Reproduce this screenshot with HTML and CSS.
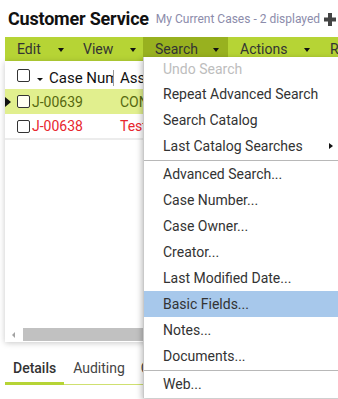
FILE: index.html
```html
<!DOCTYPE html>
<html lang="en">
<head>
  <meta charset="UTF-8" />
  <title>Customer Service</title>
  <link rel="stylesheet" href="styles.css">
</head>
<body>

  <div class="title-bar">
    <h1 class="title">Customer Service</h1>
    <span class="subtitle">My Current Cases - 2 displayed</span>
    <svg class="add-icon" width="12" height="13" viewBox="0 0 12 13">
      <rect x="4" y="0" width="4" height="13" fill="#444"/>
      <rect x="0" y="4.5" width="12" height="4" fill="#444"/>
    </svg>
  </div>

  <div class="toolbar">
    <div class="tb-item tb-edit">Edit <span class="caret"></span></div>
    <div class="tb-item tb-view">View <span class="caret"></span></div>
    <div class="tb-item tb-search active">Search <span class="caret"></span></div>
    <div class="tb-item tb-actions">Actions <span class="caret"></span></div>
    <div class="tb-item tb-reports">Reports <span class="caret"></span></div>
  </div>

  <div class="grid">
    <div class="grid-head">
      <div class="cell-sel"><span class="checkbox"></span><span class="caret-sm"></span></div>
      <div class="head-text cell-num">Case Number</div>
      <div class="col-sep"></div>
      <div class="head-text cell-assigned">Assigned To</div>
    </div>
    <div class="grid-row row-current">
      <div class="cell-main"><span class="row-marker"></span><span class="checkbox"></span><span class="case-no">J-00639</span></div>
      <div class="cell-assigned">CONSULTING</div>
    </div>
    <div class="grid-row row-alert">
      <div class="cell-main"><span class="checkbox"></span><span class="case-no">J-00638</span></div>
      <div class="cell-assigned">Test case</div>
    </div>
    <div class="grid-space"></div>
    <div class="hscroll">
      <div class="hscroll-btn"><span class="arrow-left"></span></div>
      <div class="hscroll-thumb"></div>
    </div>
  </div>

  <div class="tabs">
    <div class="tab active">Details</div>
    <div class="tab">Auditing</div>
    <div class="tab">Contacts</div>
  </div>

  <!-- Search dropdown -->
  <div class="menu">
    <div class="menu-item first disabled">Undo Search</div>
    <div class="menu-item">Repeat Advanced Search</div>
    <div class="menu-item">Search Catalog</div>
    <div class="menu-item">Last Catalog Searches <span class="sub-arrow"></span></div>
    <div class="menu-sep"></div>
    <div class="menu-item">Advanced Search...</div>
    <div class="menu-item">Case Number...</div>
    <div class="menu-item">Case Owner...</div>
    <div class="menu-item">Creator...</div>
    <div class="menu-item">Last Modified Date...</div>
    <div class="menu-item hover">Basic Fields...</div>
    <div class="menu-item">Notes...</div>
    <div class="menu-item">Documents...</div>
    <div class="menu-sep"></div>
    <div class="menu-item">Web...</div>
  </div>

</body>
</html>
```

FILE: styles.css
```css
html, body {
  overflow: hidden;
}

body {
  margin: 0;
  font-family: Roboto, 'Liberation Sans', sans-serif;
  background: #ffffff;
  color: #333333;
  width: 338px;
  height: 399px;
  position: relative;
}

.title-bar {
  display: flex;
  align-items: center;
  height: 37px;
  padding: 8px 0 7px 8px;
  box-sizing: border-box;
  white-space: nowrap;
}

.title {
  margin: 0;
  font-size: 18px;
  line-height: 22px;
  font-weight: 700;
  letter-spacing: -0.2px;
  color: #111111;
}

.subtitle {
  margin-left: 7px;
  font-size: 12px;
  line-height: 16px;
  color: #8c8cab;
}

.add-icon {
  margin-left: 4px;
  flex: none;
}

/* toolbar */
.toolbar {
  display: flex;
  margin-left: 5px;
  height: 24px;
  background-color: #b6d435;
  white-space: nowrap;
  overflow: hidden;
}

.tb-item {
  display: flex;
  align-items: center;
  justify-content: space-between;
  flex: none;
  box-sizing: border-box;
  padding: 0 7px 0 12px;
  font-size: 14px;
  line-height: 24px;
  color: #333333;
}

.tb-item.active {
  background-color: #98b11f;
  padding-right: 9px;
}

.tb-edit { width: 66px; }
.tb-view { width: 72px; }
.tb-search { width: 85px; }
.tb-actions { width: 90px; padding-right: 8px; }
.tb-reports { width: 20px; overflow: hidden; }

.caret {
  width: 0;
  height: 0;
  border-left: 3.5px solid transparent;
  border-right: 3.5px solid transparent;
  border-top: 4px solid #111111;
  margin-top: 2px;
}

/* grid */
.grid {
  display: flex;
  flex-direction: column;
  margin-left: 5px;
  width: 320px;
  height: 281px;
  background: #ffffff;
  box-shadow: 0 1px 6px rgba(0, 0, 0, 0.22);
}

.grid-head {
  display: flex;
  align-items: center;
  height: 28px;
  white-space: nowrap;
}

.cell-sel {
  display: flex;
  align-items: center;
  width: 41px;
  box-sizing: border-box;
  padding-left: 12px;
  flex: none;
}

.checkbox {
  display: inline-block;
  width: 13px;
  height: 13px;
  box-sizing: border-box;
  border: 1px solid #333333;
  border-radius: 2px;
  background: #ffffff;
  flex: none;
}

.caret-sm {
  width: 0;
  height: 0;
  border-left: 3px solid transparent;
  border-right: 3px solid transparent;
  border-top: 3.5px solid #111111;
  margin: 9px 0 0 7px;
}

.head-text {
  margin-top: 6px;
  font-size: 15px;
  line-height: 16px;
  color: #111111;
}

.cell-num {
  width: 67px;
  box-sizing: border-box;
  padding: 0 6px 0 3px;
  overflow: hidden;
  flex: none;
}

.col-sep {
  width: 1px;
  height: 16px;
  margin-top: 6px;
  background: #9a9a9a;
  flex: none;
}

.cell-assigned {
  width: 29px;
  box-sizing: border-box;
  padding-left: 6px;
  overflow: hidden;
  flex: none;
}

.grid-row {
  display: flex;
  align-items: center;
  height: 25px;
  font-size: 14px;
  white-space: nowrap;
}

.grid-row .cell-assigned {
  width: 34px;
}

.row-current {
  background-color: #e1ef8e;
  color: #56680f;
}

.row-current .checkbox {
  background: #fffff2;
}

.row-alert {
  height: 24px;
  border-bottom: 2px solid #ececec;
  color: #e8262d;
}

.cell-main {
  display: flex;
  align-items: center;
  width: 109px;
  box-sizing: border-box;
  padding-left: 12px;
  overflow: hidden;
  flex: none;
}

.row-current .cell-main {
  padding-left: 0;
}

.row-marker {
  width: 0;
  height: 0;
  border-top: 5px solid transparent;
  border-bottom: 5px solid transparent;
  border-left: 6px solid #111111;
  margin-right: 6px;
}

.case-no {
  margin-left: 2px;
}

.grid-space {
  flex: 1;
}

.hscroll {
  display: flex;
  height: 13px;
  margin-bottom: 1px;
}

.hscroll-btn {
  display: flex;
  align-items: center;
  width: 18px;
  box-sizing: border-box;
  padding-left: 7px;
  flex: none;
}

.arrow-left {
  width: 0;
  height: 0;
  border-top: 3px solid transparent;
  border-bottom: 3px solid transparent;
  border-right: 3px solid #a3a3a3;
}

.hscroll-thumb {
  flex: 1;
  background: #c1c1c1;
}

/* tabs */
.tabs {
  display: flex;
  margin: 16px 0 0 5px;
  border-bottom: 1px solid #cfe070;
  white-space: nowrap;
}

.tab {
  padding: 0 8px 4px 8px;
  margin-bottom: -1px;
  font-size: 14px;
  line-height: 20px;
  color: #444444;
  border-bottom: 3px solid transparent;
}

.tab.active {
  font-weight: 500;
  color: #333333;
  border-bottom-color: #b6d435;
}

.tab:nth-child(2) {
  padding-left: 9px;
}

.tab:nth-child(3) {
  width: 4px;
  overflow: hidden;
}

/* dropdown menu */
.menu {
  position: absolute;
  left: 143px;
  top: 57px;
  width: 200px;
  padding-bottom: 1px;
  background: #ffffff;
  border-left: 1px solid #c9c9c9;
  box-shadow: -1px 2px 6px rgba(0, 0, 0, 0.28);
  white-space: nowrap;
}

.menu-item {
  display: flex;
  align-items: center;
  height: 26px;
  padding: 0 11px 0 19px;
  font-size: 14px;
  color: #333333;
}

.menu-item.first {
  height: 24px;
}

.menu-item.disabled {
  color: #bdbdbd;
}

.menu-item.hover {
  background-color: #a7c8eb;
}

.sub-arrow {
  margin-left: auto;
  width: 0;
  height: 0;
  border-top: 3.5px solid transparent;
  border-bottom: 3.5px solid transparent;
  border-left: 4px solid #111111;
}

.menu-sep {
  margin-top: 1px;
  border-top: 1px solid #b8b8b8;
}
```
